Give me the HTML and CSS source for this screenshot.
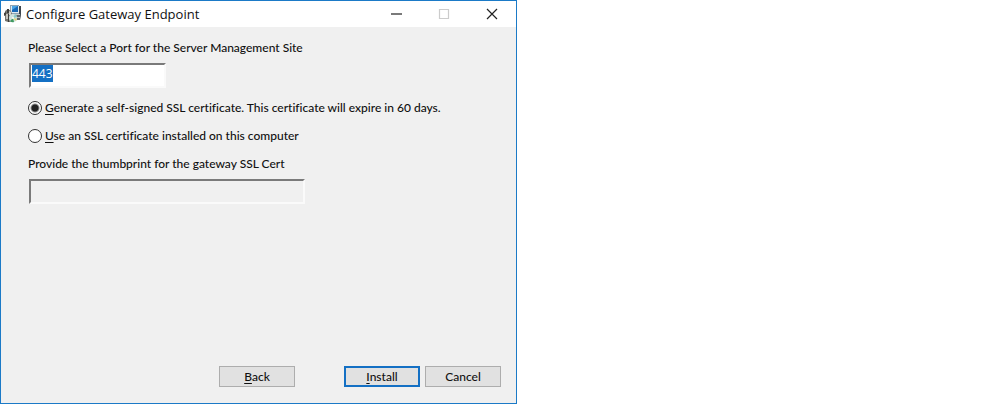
FILE: index.html
```
<!DOCTYPE html>
<html lang="en">
<head>
    <meta charset="UTF-8">
    <meta name="viewport" content="width=device-width, initial-scale=1.0">
    <title>Configure Gateway Endpoint</title>
    <link rel="stylesheet" href="styles.css">
</head>
<body>
    <form class="window" onsubmit="return false;">
        <header class="titlebar">
            <svg class="app-icon" viewBox="0 0 18 18" aria-hidden="true">
                <!-- computer -->
                <path d="M6 0h9v9H6z" fill="#8fa3b3"/>
                <path d="M7 1h8v7H7z" fill="#dfe9f0"/>
                <path d="M8 1h6v6H8z" fill="#1668b8"/>
                <path d="M8 1h6L8 5z" fill="#4aa5e6"/>
                <path d="M15 1h2v10h-2z" fill="#3c454d"/>
                <path d="M9 9h7l1 2-1 4h-3z" fill="#5d6468"/>
                <path d="M9 9h7v1H9z" fill="#c4cace"/>
                <path d="M12 12h4v1h-4z" fill="#b3b9bc"/>
                <!-- box -->
                <path d="M1 6l3-2 3 2 1 3v7l-2 1H4l-3-1z" fill="#77756f"/>
                <path d="M0 8l2-1v3l-2 1z" fill="#44433f"/>
                <path d="M3 4h2v4H3z" fill="#3e3d3a"/>
                <path d="M5 6l2 1v3H5z" fill="#d5d3cc"/>
                <path d="M2 9h2v5H2z" fill="#c6c3bb"/>
                <path d="M4 9h1v8H4z" fill="#3e3d3a"/>
                <!-- disc -->
                <circle cx="9" cy="13" r="4" fill="#cfe0dc"/>
                <path d="M9 13l-3 3a4 4 0 0 0 4 1z" fill="#3f9a62"/>
                <path d="M9 13l4-1a4 4 0 0 0-2-3z" fill="#85c7c8"/>
                <path d="M9 13l3 3 1-2z" fill="#e5d36b"/>
                <circle cx="9" cy="13" r="1" fill="#fff"/>
            </svg>
            <h1 class="title">Configure Gateway Endpoint</h1>
            <div class="controls">
                <button type="button" class="control" aria-label="Minimize">
                    <svg viewBox="0 0 12 12"><path d="M1 6h11"/></svg>
                </button>
                <button type="button" class="control" aria-label="Maximize" disabled>
                    <svg viewBox="0 0 12 12"><path d="M1.500 1.500h9v9h-9z"/></svg>
                </button>
                <button type="button" class="control" aria-label="Close">
                    <svg viewBox="0 0 12 12"><path d="M1 1l10 10M11 1L1 11"/></svg>
                </button>
            </div>
        </header>
        <main class="content">
            <label class="label" for="port">Please Select a Port for the Server Management Site</label>
            <input class="field port" type="text" id="port" name="port" value="443">
            <label class="option">
                <input type="radio" name="cert" value="generate" checked>
                <span><u>G</u>enerate a self-signed SSL certificate. This certificate will expire in 60 days.</span>
            </label>
            <label class="option">
                <input type="radio" name="cert" value="installed">
                <span><u>U</u>se an SSL certificate installed on this computer</span>
            </label>
            <label class="label" for="thumbprint">Provide the thumbprint for the gateway SSL Cert</label>
            <input class="field thumbprint" type="text" id="thumbprint" name="thumbprint" disabled>
        </main>
        <footer class="actions">
            <button type="button" class="btn back"><u>B</u>ack</button>
            <button type="submit" class="btn default"><u>I</u>nstall</button>
            <button type="button" class="btn">Cancel</button>
        </footer>
    </form>

    <script type="text/javascript">
        var port = document.getElementById('port');
        var thumbprint = document.getElementById('thumbprint');
        var certs = document.getElementsByName('cert');

        port.focus();
        port.select();

        // the thumbprint is only needed for an installed certificate
        for (var i = 0; i < certs.length; i++) {
            certs[i].onchange = function () {
                thumbprint.disabled = this.value != 'installed';
            };
        }
    </script>
</body>
</html>
```
FILE: styles.css
```
* {
    box-sizing: border-box;
}

body {
    margin: 0;
    background: #fff;
    color: #111;
    font-family: Lato, "Open Sans", sans-serif;
    font-size: 12px;
    font-weight: 500;
    font-variant-ligatures: none;
}

button,
input {
    font: inherit;
    color: inherit;
}

u {
    text-underline-offset: 2px;
}

.window {
    display: flex;
    flex-direction: column;
    width: 100%;
    max-width: 517px;
    min-height: 100vh;
    background: #f0f0f0;
    border: 1px solid #1b7ac7;
}

/* title bar */

.titlebar {
    display: flex;
    align-items: center;
    height: 26px;
    padding-left: 3px;
    background: #fff;
}

.app-icon {
    width: 18px;
    height: 18px;
}

.title {
    flex: 1;
    margin: 0 0 0 4px;
    font-family: "Open Sans", sans-serif;
    font-size: 13px;
    font-weight: normal;
    line-height: 24px;
}

.controls {
    display: flex;
}

.control {
    display: flex;
    align-items: center;
    justify-content: center;
    width: 48px;
    height: 26px;
    padding: 0;
    border: 0;
    background: none;
}

.control svg {
    width: 12px;
    height: 12px;
    fill: none;
    stroke: #222;
    stroke-width: 1.2;
}

.control:disabled svg {
    stroke: #ccc;
}

/* form */

.content {
    display: flex;
    flex: 1;
    flex-direction: column;
    align-items: flex-start;
    padding: 13px 27px;
}

.label {
    line-height: 16px;
}

.field {
    width: 100%;
    height: 25px;
    margin: 7px 0 12px 1px;
    padding: 0 1px 4px;
    background: #fff;
    border: 2px solid;
    border-color: #7a7a7a #fafafa #fafafa #7a7a7a;
    outline: 0;
    font-family: "Open Sans", sans-serif;
    font-weight: normal;
}

.field::selection {
    background: #1470c4;
    color: #fff;
}

.field:disabled {
    background: #f0f0f0;
}

.port {
    max-width: 137px;
}

.thumbprint {
    max-width: 276px;
}

.option {
    display: flex;
    align-items: center;
    gap: 3px;
    margin-bottom: 12px;
    line-height: 16px;
}

.option input {
    appearance: none;
    flex: none;
    width: 14px;
    height: 14px;
    margin: 0;
    background: #fff;
    border: 1px solid #333;
    border-radius: 50%;
}

.option input:checked {
    background: radial-gradient(circle, #222 3px, #fff 5px);
}

/* buttons */

.actions {
    display: flex;
    justify-content: flex-end;
    gap: 5px;
    padding: 0 15px 16px;
}

.btn {
    width: 76px;
    height: 21px;
    padding: 0;
    line-height: 16px;
    background: #e1e1e1;
    border: 1px solid #adadad;
}

.btn.default {
    border: 2px solid #1470c4;
}

.back {
    margin-right: 44px;
}
```
